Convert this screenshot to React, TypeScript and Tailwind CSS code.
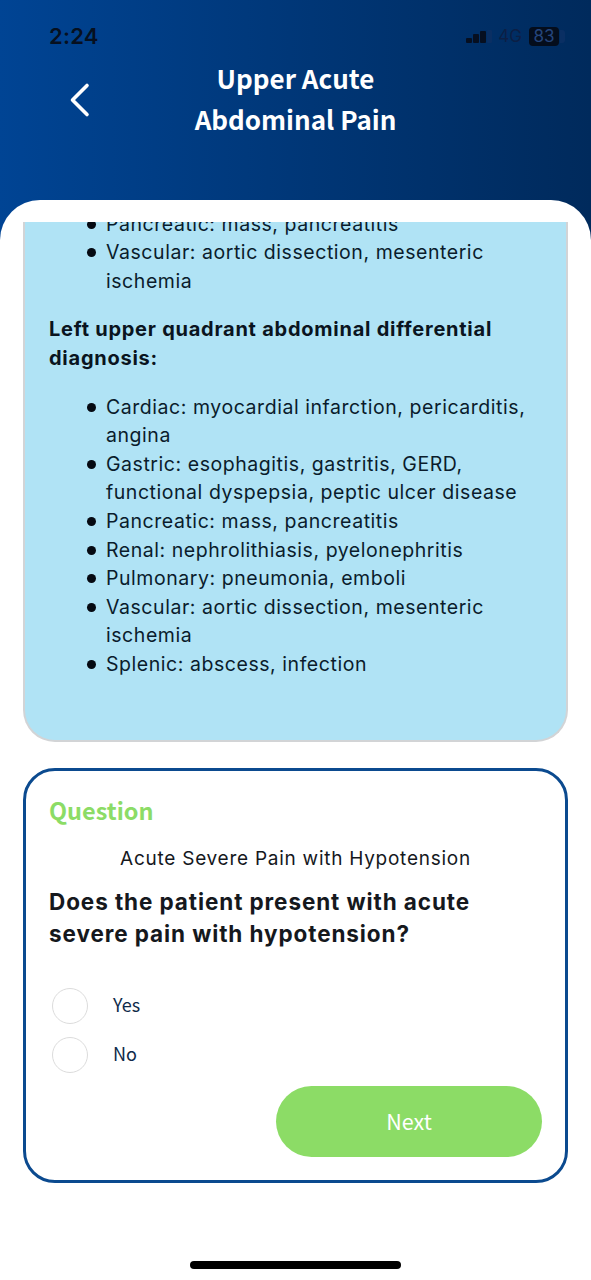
const rightUpperTail = ['Pancreatic: mass, pancreatitis', 'Vascular: aortic dissection, mesenteric ischemia']

const leftUpper = [
  'Cardiac: myocardial infarction, pericarditis, angina',
  'Gastric: esophagitis, gastritis, GERD, functional dyspepsia, peptic ulcer disease',
  'Pancreatic: mass, pancreatitis',
  'Renal: nephrolithiasis, pyelonephritis',
  'Pulmonary: pneumonia, emboli',
  'Vascular: aortic dissection, mesenteric ischemia',
  'Splenic: abscess, infection',
]

function BulletList({ items }: { items: string[] }) {
  return (
    <ul className="pl-[62px] pr-[26px] text-[19.5px] leading-[28.6px] tracking-[0.55px] text-[#0a1c2c]">
      {items.map((item) => (
        <li key={item} className="flex gap-[10px]">
          <span className="mt-[10px] h-[9px] w-[9px] shrink-0 rounded-full bg-[#050a12]" />
          <span>{item}</span>
        </li>
      ))}
    </ul>
  )
}

function Radio({ label }: { label: string }) {
  return (
    <div className="flex items-center">
      <span className="ml-[3px] h-[36px] w-[36px] translate-y-[2px] rounded-full border-[1.5px] border-[#dcdcdc] bg-white" />
      <span className="ml-[25px] text-[18px] leading-[24px] text-[#0f2a4a]">{label}</span>
    </div>
  )
}

export default function App() {
  return (
    <div className="relative h-[1280px] w-[591px] overflow-hidden bg-gradient-to-r from-[#004494] to-[#002a5c] font-['Noto_Sans_CJK_SC',sans-serif]">
      <div className="flex h-[58px] items-center justify-between pl-[49px] pr-[26px] pt-[14px] font-['Inter',sans-serif]">
        <span className="text-[22px] font-semibold leading-[30px] tracking-[0.25px] text-[#06101f]">2:24</span>
        <div className="flex items-center">
          <svg width="26" height="13" viewBox="0 0 26 13" className="mr-[6px]">
            <rect x="0" y="8" width="6" height="5" rx="1" fill="#060f20" />
            <rect x="7" y="4" width="6" height="9" rx="1" fill="#060f20" />
            <rect x="14" y="1" width="6" height="12" rx="1" fill="#060f20" />
            <rect x="21" y="0" width="5" height="13" rx="1" fill="#0a2f63" />
          </svg>
          <span className="text-[17px] leading-[20px] text-[#0c1f45]">4G</span>
          <span className="ml-[7px] flex h-[19px] w-[30px] items-center justify-center rounded-[4px] bg-[#040d1c] text-[17px] leading-[19px] text-[#24457c]">
            83
          </span>
          <span className="ml-[1px] h-[13px] w-[5px] rounded-r-[3px] bg-[#0a2f63]" />
        </div>
      </div>

      <div className="relative flex h-[142px] flex-col items-center">
        <svg
          width="24"
          height="36"
          viewBox="0 0 24 36"
          fill="none"
          className="absolute left-[68px] top-[24px]"
        >
          <path d="M19 3.5 L4.5 18 L19 32.5" stroke="white" strokeWidth="3.6" strokeLinecap="round" strokeLinejoin="round" />
        </svg>
        <h1 className="-mt-[1px] text-center text-[26px] font-bold leading-[41px] text-white">
          Upper Acute
          <br />
          Abdominal Pain
        </h1>
      </div>

      <main className="h-[1080px] rounded-t-[40px] bg-white px-[23px] pt-[22px]">
        <div className="h-[520px] overflow-hidden rounded-b-[32px] border-x-2 border-b-2 border-[#d2d4d6] bg-[#b0e3f5] font-['Inter',sans-serif]">
          <div className="-mt-[12.3px]">
            <BulletList items={rightUpperTail} />
            <p className="mt-[20px] pl-[24px] pr-[26px] text-[20px] font-bold leading-[28.6px] tracking-[0.75px] text-[#0a1420]">
              Left upper quadrant abdominal differential diagnosis:
            </p>
            <div className="mt-[20px]">
              <BulletList items={leftUpper} />
            </div>
          </div>
        </div>

        <section className="mt-[26px] h-[415px] rounded-[32px] border-[3px] border-[#0b4a8f] bg-white px-[23px] pt-[21px]">
          <h2 className="text-[23.5px] font-bold leading-[36px] text-[#8cdc66]">Question</h2>
          <p className="mt-[18px] text-center font-['Inter',sans-serif] text-[19px] leading-[26px] tracking-[0.74px] text-[#15181d]">
            Acute Severe Pain with Hypotension
          </p>
          <p className="mt-[14px] font-['Inter',sans-serif] text-[22.5px] font-bold leading-[32px] tracking-[0.9px] text-[#15181d]">
            Does the patient present with acute severe pain with hypotension?
          </p>
          <div className="mt-[36px] flex flex-col gap-[13px]">
            <Radio label="Yes" />
            <Radio label="No" />
          </div>
          <div className="mt-[15px] flex justify-end">
            <button className="h-[71px] w-[266px] rounded-full bg-[#8cdc66] text-[21.5px] text-white">Next</button>
          </div>
        </section>

        <div className="mx-auto mt-[78px] h-[8px] w-[211px] rounded-full bg-black" />
      </main>
    </div>
  )
}
